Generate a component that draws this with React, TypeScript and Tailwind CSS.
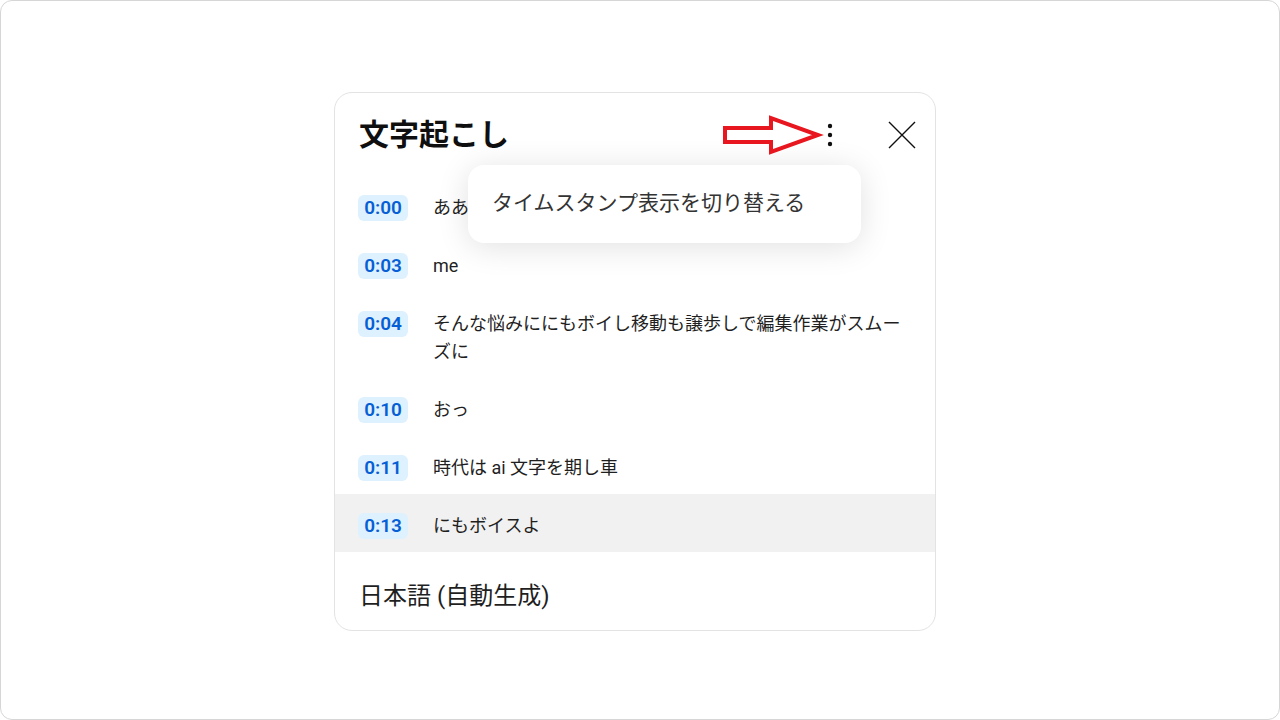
import React from 'react'

const rows = [
  { time: '0:00', text: 'ああ' },
  { time: '0:03', text: 'me' },
  { time: '0:04', text: 'そんな悩みににもボイし移動も譲歩しで編集作業がスムーズに' },
  { time: '0:10', text: 'おっ' },
  { time: '0:11', text: '時代は ai 文字を期し車' },
  { time: '0:13', text: 'にもボイスよ', active: true },
]

const font = { fontFamily: 'Roboto, "Noto Sans CJK JP", sans-serif' }

function DotsIcon() {
  return (
    <svg width="24" height="28" viewBox="0 0 24 28" fill="#0f0f0f">
      <circle cx="12" cy="5" r="2.2" />
      <circle cx="12" cy="14" r="2.2" />
      <circle cx="12" cy="23" r="2.2" />
    </svg>
  )
}

function CloseIcon() {
  return (
    <svg width="28" height="28" viewBox="0 0 28 28" fill="none" stroke="#0f0f0f" strokeWidth="1.4">
      <path d="M1 1L27 27M27 1L1 27" />
    </svg>
  )
}

export default function App() {
  return (
    <div className="h-[720px] w-full bg-white" style={font}>
      <div className="h-full w-full rounded-[12px] border border-[#d6d6d6] pl-[333px] pt-[91px]">
        <div className="relative w-[602px] rounded-[18px] border border-[#e3e3e3] bg-white overflow-hidden">
          {/* header */}
          <div className="flex h-[83px] items-center pl-[24px] pr-[19px]">
            <h2 className="text-[30px] font-bold leading-none text-[#0f0f0f]">文字起こし</h2>
            <div className="flex-1" />
            <button className="mr-[46px] flex h-[28px] w-[24px] items-center justify-center">
              <DotsIcon />
            </button>
            <button className="flex h-[28px] w-[28px] items-center justify-center">
              <CloseIcon />
            </button>
          </div>

          {/* transcript rows */}
          <div className="flex flex-col">
            {rows.map((r) => (
              <div
                key={r.time}
                className={
                  'flex items-start gap-[25px] pl-[23px] pr-[24px] pt-[18px] pb-[12px] ' +
                  (r.active ? 'bg-[#f1f1f1]' : '')
                }
              >
                <span className="mt-[1px] flex h-[26px] w-[50px] shrink-0 items-center justify-center rounded-[6px] bg-[#def1ff] text-[19px] font-semibold text-[#065fd4]">
                  {r.time}
                </span>
                <p className="flex-1 text-[18px] leading-[28px] text-[#1f1f1f]">{r.text}</p>
              </div>
            ))}
          </div>

          {/* footer */}
          <div className="pl-[24px] pt-[28px] pb-[18px] text-[24px] leading-[32px] text-[#1f1f1f]">
            日本語 (自動生成)
          </div>

          {/* popup menu */}
          <div className="absolute left-[133px] top-[72px] flex h-[78px] w-[393px] items-center rounded-[16px] bg-white pl-[24px] shadow-[0_4px_32px_rgba(0,0,0,0.12)]">
            <span className="text-[21px] text-[#333333]">タイムスタンプ表示を切り替える</span>
          </div>

          {/* red annotation arrow */}
          <svg className="absolute left-[386px] top-[20px]" width="104" height="44" viewBox="0 0 104 44" fill="none">
            <polygon
              points="4,15 50,15 50,5 97,22 50,39 50,29 4,29"
              stroke="#e8161e"
              strokeWidth="4"
              strokeLinejoin="miter"
            />
          </svg>
        </div>
      </div>
    </div>
  )
}
